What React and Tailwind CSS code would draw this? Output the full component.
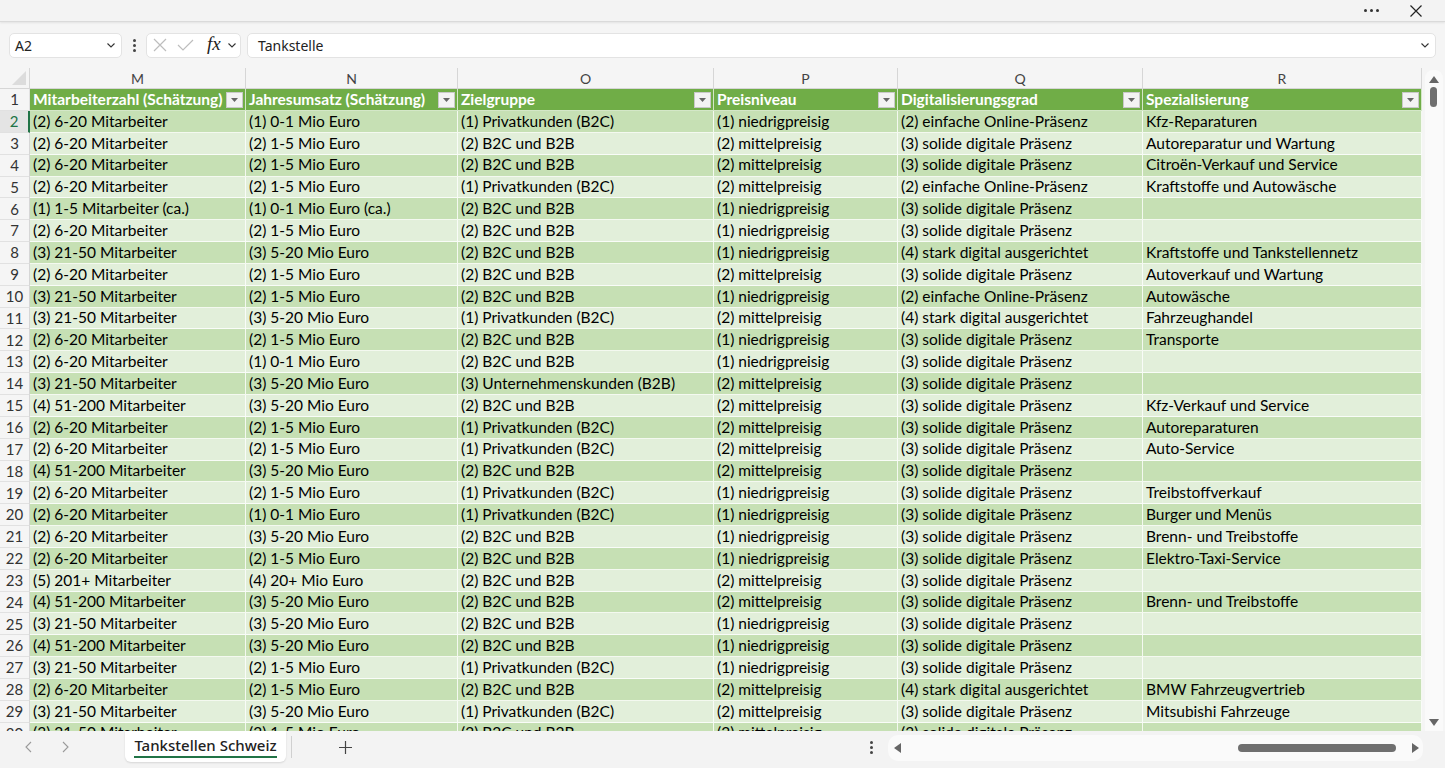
import React from 'react'

const cols = [
  { letter: 'M', w: 216, title: 'Mitarbeiterzahl (Schätzung)' },
  { letter: 'N', w: 212, title: 'Jahresumsatz (Schätzung)' },
  { letter: 'O', w: 256, title: 'Zielgruppe' },
  { letter: 'P', w: 184, title: 'Preisniveau' },
  { letter: 'Q', w: 245, title: 'Digitalisierungsgrad' },
  { letter: 'R', w: 279, title: 'Spezialisierung' },
]

const M = {
  a: '(1) 1-5 Mitarbeiter (ca.)',
  b: '(2) 6-20 Mitarbeiter',
  c: '(3) 21-50 Mitarbeiter',
  d: '(4) 51-200 Mitarbeiter',
  e: '(5) 201+ Mitarbeiter',
}
const N = {
  a: '(1) 0-1 Mio Euro',
  b: '(2) 1-5 Mio Euro',
  c: '(3) 5-20 Mio Euro',
  d: '(4) 20+ Mio Euro',
  x: '(1) 0-1 Mio Euro (ca.)',
}
const O = { p: '(1) Privatkunden (B2C)', b: '(2) B2C und B2B', u: '(3) Unternehmenskunden (B2B)' }
const P = { n: '(1) niedrigpreisig', m: '(2) mittelpreisig' }
const Q = { e: '(2) einfache Online-Präsenz', s: '(3) solide digitale Präsenz', x: '(4) stark digital ausgerichtet' }

const rows = [
  [M.b, N.a, O.p, P.n, Q.e, 'Kfz-Reparaturen'],
  [M.b, N.b, O.b, P.m, Q.s, 'Autoreparatur und Wartung'],
  [M.b, N.b, O.b, P.m, Q.s, 'Citroën-Verkauf und Service'],
  [M.b, N.b, O.p, P.m, Q.e, 'Kraftstoffe und Autowäsche'],
  [M.a, N.x, O.b, P.n, Q.s, ''],
  [M.b, N.b, O.b, P.n, Q.s, ''],
  [M.c, N.c, O.b, P.n, Q.x, 'Kraftstoffe und Tankstellennetz'],
  [M.b, N.b, O.b, P.m, Q.s, 'Autoverkauf und Wartung'],
  [M.c, N.b, O.b, P.n, Q.e, 'Autowäsche'],
  [M.c, N.c, O.p, P.m, Q.x, 'Fahrzeughandel'],
  [M.b, N.b, O.b, P.n, Q.s, 'Transporte'],
  [M.b, N.a, O.b, P.n, Q.s, ''],
  [M.c, N.c, O.u, P.m, Q.s, ''],
  [M.d, N.c, O.b, P.m, Q.s, 'Kfz-Verkauf und Service'],
  [M.b, N.b, O.p, P.m, Q.s, 'Autoreparaturen'],
  [M.b, N.b, O.p, P.m, Q.s, 'Auto-Service'],
  [M.d, N.c, O.b, P.m, Q.s, ''],
  [M.b, N.b, O.p, P.n, Q.s, 'Treibstoffverkauf'],
  [M.b, N.a, O.p, P.n, Q.s, 'Burger und Menüs'],
  [M.b, N.c, O.b, P.n, Q.s, 'Brenn- und Treibstoffe'],
  [M.b, N.b, O.b, P.n, Q.s, 'Elektro-Taxi-Service'],
  [M.e, N.d, O.b, P.m, Q.s, ''],
  [M.d, N.c, O.b, P.m, Q.s, 'Brenn- und Treibstoffe'],
  [M.c, N.c, O.b, P.n, Q.s, ''],
  [M.d, N.c, O.b, P.n, Q.s, ''],
  [M.c, N.b, O.p, P.n, Q.s, ''],
  [M.b, N.b, O.b, P.m, Q.x, 'BMW Fahrzeugvertrieb'],
  [M.c, N.c, O.p, P.m, Q.s, 'Mitsubishi Fahrzeuge'],
  [M.c, N.b, O.b, P.m, Q.s, ''],
]

const cellFont = { fontFamily: 'Lato, "Open Sans", sans-serif' }

function Chevron({ className = '' }) {
  return (
    <svg width="12" height="12" viewBox="0 0 12 12" className={className}>
      <path d="M2.5 4.5 L6 8 L9.5 4.5" fill="none" stroke="#333" strokeWidth="1.1" />
    </svg>
  )
}

function Dots({ className = '' }) {
  return (
    <div className={`flex flex-col items-center gap-[2px] ${className}`}>
      <span className="w-[3px] h-[3px] bg-[#444] rounded-full" />
      <span className="w-[3px] h-[3px] bg-[#444] rounded-full" />
      <span className="w-[3px] h-[3px] bg-[#444] rounded-full" />
    </div>
  )
}

function FilterBtn() {
  return (
    <div className="w-[17px] h-[16px] bg-[#f3f3f3] border border-[#c9c9c9] flex items-center justify-center shrink-0">
      <svg width="7" height="4" viewBox="0 0 7 4"><path d="M0 0 H7 L3.5 4 Z" fill="#666" /></svg>
    </div>
  )
}

export default function App() {
  return (
    <div className="w-[1445px] h-[768px] overflow-hidden bg-[#f5f5f5] flex flex-col text-black" style={cellFont}>
      {/* title strip */}
      <div className="h-[22px] shrink-0 bg-[#f3f3f3] border-b border-[#dadada] shadow-[0_1px_2px_rgba(0,0,0,0.08)] flex items-center justify-end pr-[22px] gap-[30px]">
        <div className="flex items-center gap-[3px]">
          <span className="w-[3px] h-[3px] bg-[#333] rounded-full" />
          <span className="w-[3px] h-[3px] bg-[#333] rounded-full" />
          <span className="w-[3px] h-[3px] bg-[#333] rounded-full" />
        </div>
        <svg width="14" height="14" viewBox="0 0 14 14"><path d="M1.5 1.5 L12.5 12.5 M12.5 1.5 L1.5 12.5" stroke="#222" strokeWidth="1.2" /></svg>
      </div>

      {/* formula bar */}
      <div className="h-[46px] shrink-0 flex items-center pl-[9px] pr-[9px] gap-[6px]" style={{ fontFamily: '"Noto Sans", sans-serif' }}>
        <div className="w-[113px] h-[25px] bg-white rounded-[5px] border border-[#e3e3e3] flex items-center justify-between pl-[5px] pr-[4px]">
          <span className="text-[14px] text-[#222]">A2</span>
          <Chevron />
        </div>
        <Dots className="w-[12px]" />
        <div className="w-[95px] h-[25px] bg-white rounded-[5px] border border-[#e3e3e3] flex items-center pl-[6px]">
          <svg width="14" height="14" viewBox="0 0 14 14"><path d="M1 1 L13 13 M13 1 L1 13" stroke="#bdbdbd" strokeWidth="1.2" /></svg>
          <svg width="17" height="14" viewBox="0 0 17 14" className="ml-[10px]"><path d="M1 7 L6 12 L16 2" fill="none" stroke="#bdbdbd" strokeWidth="1.2" /></svg>
          <span className="italic text-[19px] text-[#222] leading-none ml-[13px] -mt-[3px]" style={{ fontFamily: '"Liberation Serif", serif' }}>fx</span>
          <Chevron className="ml-[5px]" />
        </div>
        <div className="flex-1 h-[25px] bg-white rounded-[5px] border border-[#e3e3e3] flex items-center justify-between pl-[10px] pr-[4px]">
          <span className="text-[14px] text-[#222]">Tankstelle</span>
          <Chevron />
        </div>
      </div>

      {/* grid */}
      <div className="flex-1 flex min-h-0">
        <div className="flex flex-col overflow-hidden w-[1422px]">
          {/* column letters */}
          <div className="flex h-[21px] shrink-0">
            <div className="w-[30px] h-full bg-[#f5f5f5] border-r border-b border-[#d6d6d6] relative">
              <svg width="14" height="14" viewBox="0 0 14 14" className="absolute right-[3px] bottom-[3px]"><path d="M14 0 V14 H0 Z" fill="#dcdcdc" /></svg>
            </div>
            {cols.map(c => (
              <div key={c.letter} style={{ width: c.w }} className="h-full border-r border-b border-[#d6d6d6] flex items-center justify-center text-[14px] text-[#444]">
                {c.letter}
              </div>
            ))}
          </div>

          {/* header row */}
          <div className="flex h-[22px] shrink-0">
            <div className="w-[30px] bg-[#f5f5f5] border-r border-b border-[#e1e1e1] flex items-center justify-center text-[15px] text-[#333]">1</div>
            {cols.map(c => (
              <div key={c.letter} style={{ width: c.w }} className="bg-[#70ad47] border-r border-b border-white/70 flex items-center justify-between pl-[3px] pr-[2px]">
                <span className="text-white font-bold text-[15.5px] whitespace-nowrap">{c.title}</span>
                <FilterBtn />
              </div>
            ))}
          </div>

          {/* data rows */}
          {rows.map((r, i) => {
            const n = i + 2
            const dark = n % 2 === 0
            const selected = n === 2
            return (
              <div key={n} className="flex h-[21.85px] shrink-0">
                <div className={`w-[30px] border-b border-[#e1e1e1] flex items-center justify-center text-[15px] ${selected ? 'bg-[#e4e4e4] text-[#217346] border-r-2 border-r-[#217346]' : 'bg-[#f5f5f5] text-[#333] border-r border-r-[#d6d6d6]'}`}>
                  {n}
                </div>
                {r.map((v, j) => (
                  <div key={j} style={{ width: cols[j].w }} className={`border-r border-b border-white/80 flex items-center pl-[3px] overflow-hidden ${dark ? 'bg-[#c6e0b4]' : 'bg-[#e2efda]'}`}>
                    <span className="text-[15.5px] whitespace-nowrap">{v}</span>
                  </div>
                ))}
              </div>
            )
          })}
        </div>

        {/* vertical scrollbar */}
        <div className="w-[23px] pt-[2px] flex justify-center">
          <div className="w-[18px] h-full bg-[#fafafa] rounded-t-[8px] flex flex-col items-center justify-between pt-[6px] pb-[5px]">
            <div className="flex flex-col items-center gap-[4px]">
              <svg width="10" height="7" viewBox="0 0 10 7"><path d="M5 0 L10 7 H0 Z" fill="#666" /></svg>
              <div className="w-[7px] h-[20px] rounded-full bg-[#6f6f6f]" />
            </div>
            <svg width="10" height="7" viewBox="0 0 10 7"><path d="M0 0 H10 L5 7 Z" fill="#666" /></svg>
          </div>
        </div>
      </div>

      {/* sheet tabs bar */}
      <div className="h-[37px] shrink-0 bg-[#f3f3f3] flex items-start" style={{ fontFamily: '"Noto Sans", sans-serif' }}>
        <div className="w-[125px] h-[32px] flex items-center pl-[23px] gap-[24px]">
          <svg width="12" height="12" viewBox="0 0 12 12"><path d="M8 1 L3 6 L8 11" fill="none" stroke="#9a9a9a" strokeWidth="1.1" /></svg>
          <svg width="12" height="12" viewBox="0 0 12 12"><path d="M4 1 L9 6 L4 11" fill="none" stroke="#9a9a9a" strokeWidth="1.1" /></svg>
        </div>
        <div className="w-[161px] h-[31px] bg-white rounded-b-[6px] shadow-[0_1px_2px_rgba(0,0,0,0.12)] flex flex-col items-center justify-center">
          <span className="text-[15px] font-medium text-[#222] leading-[20px]">Tankstellen Schweiz</span>
          <span className="w-[143px] h-[2px] bg-[#217346] mt-[1px]" />
        </div>
        <div className="w-px h-[22px] bg-[#d0d0d0] mt-[5px] ml-[5px]" />
        <div className="w-[106px] h-[32px] flex items-center justify-center">
          <svg width="15" height="15" viewBox="0 0 15 15"><path d="M7.5 1 V14 M1 7.5 H14" stroke="#444" strokeWidth="1.2" /></svg>
        </div>
        <div className="flex-1" />
        <Dots className="w-[20px] h-[32px] justify-center mr-[7px]" />
        <div className="w-[535px] h-[26px] mt-[4px] mr-[22px] bg-[#fafafa] rounded-[10px] flex items-center justify-between pl-[6px] pr-[4px]">
          <svg width="7" height="10" viewBox="0 0 7 10"><path d="M7 0 V10 L0 5 Z" fill="#666" /></svg>
          <div className="flex items-center gap-[16px]">
            <div className="w-[158px] h-[8px] rounded-full bg-[#6f6f6f]" />
            <svg width="7" height="10" viewBox="0 0 7 10"><path d="M0 0 V10 L7 5 Z" fill="#666" /></svg>
          </div>
        </div>
      </div>
    </div>
  )
}
